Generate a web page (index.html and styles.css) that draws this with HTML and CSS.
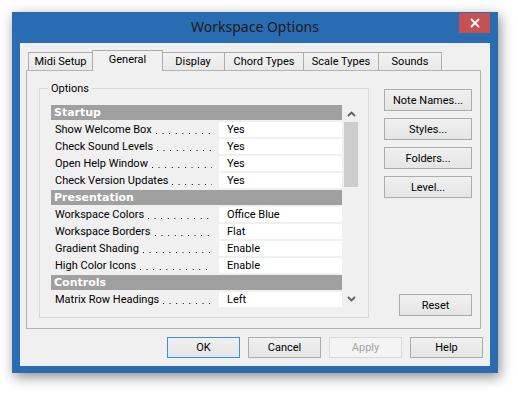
FILE: index.html
```html
<!DOCTYPE html>
<html>
<head>
<meta charset="utf-8">
<link rel="stylesheet" href="styles.css">
</head>
<body>
<div class="window">
  <div class="titlebar">
    <span class="title">Workspace Options</span>
    <div class="close"><svg width="10" height="10" viewBox="0 0 10 10"><path d="M1 1L9 9M9 1L1 9" stroke="#fff" stroke-width="1.8" fill="none"/></svg></div>
  </div>
  <div class="client">
    <div class="tabs">
      <div class="tab w65">Midi Setup</div>
      <div class="tab sel">General</div>
      <div class="tab w63">Display</div>
      <div class="tab w79">Chord Types</div>
      <div class="tab w75">Scale Types</div>
      <div class="tab w63">Sounds</div>
    </div>
    <div class="panel">
      <div class="group">
        <span class="legend">Options</span>
        <div class="grid">
          <div class="rows">
            <div class="head">Startup</div>
            <div class="row"><div class="lab"><span>Show Welcome Box</span><i class="lead"></i></div><div class="val">Yes</div></div>
            <div class="row"><div class="lab"><span>Check Sound Levels</span><i class="lead"></i></div><div class="val">Yes</div></div>
            <div class="row"><div class="lab"><span>Open Help Window</span><i class="lead"></i></div><div class="val">Yes</div></div>
            <div class="row"><div class="lab"><span>Check Version Updates</span><i class="lead"></i></div><div class="val">Yes</div></div>
            <div class="head">Presentation</div>
            <div class="row"><div class="lab"><span>Workspace Colors</span><i class="lead"></i></div><div class="val">Office Blue</div></div>
            <div class="row"><div class="lab"><span>Workspace Borders</span><i class="lead"></i></div><div class="val">Flat</div></div>
            <div class="row"><div class="lab"><span>Gradient Shading</span><i class="lead"></i></div><div class="val">Enable</div></div>
            <div class="row"><div class="lab"><span>High Color Icons</span><i class="lead"></i></div><div class="val">Enable</div></div>
            <div class="head">Controls</div>
            <div class="row"><div class="lab"><span>Matrix Row Headings</span><i class="lead"></i></div><div class="val">Left</div></div>
          </div>
          <div class="scroll">
            <div class="arrow"><svg width="9" height="6" viewBox="0 0 9 6"><path d="M1 5L4.5 1.5L8 5" stroke="#606060" stroke-width="1.8" fill="none"/></svg></div>
            <div class="track"><div class="thumb"></div></div>
            <div class="arrow"><svg width="9" height="6" viewBox="0 0 9 6"><path d="M1 1L4.5 4.5L8 1" stroke="#606060" stroke-width="1.8" fill="none"/></svg></div>
          </div>
        </div>
      </div>
      <div class="side">
        <div class="btn wide">Note Names...</div>
        <div class="btn wide">Styles...</div>
        <div class="btn wide">Folders...</div>
        <div class="btn wide">Level...</div>
        <div class="btn reset">Reset</div>
      </div>
    </div>
    <div class="footer">
      <div class="btn def">OK</div>
      <div class="btn">Cancel</div>
      <div class="btn dis">Apply</div>
      <div class="btn">Help</div>
    </div>
  </div>
</div>
</body>
</html>
```
FILE: styles.css
```css
html, body {
  margin: 0;
  padding: 0;
  background: #ffffff;
  width: 518px;
  height: 394px;
  overflow: hidden;
}
body {
  padding: 12px 0 0 12px;
  box-sizing: border-box;
  font-family: Roboto, "Liberation Sans", sans-serif;
  font-size: 11px;
  color: #000;
}
.window {
  width: 486px;
  height: 361px;
  background: #2a6cb1;
  box-shadow: 2px 4px 12px rgba(0,0,0,0.45);
  display: flex;
  flex-direction: column;
}
.titlebar {
  height: 31px;
  position: relative;
  display: flex;
  align-items: center;
  justify-content: center;
}
.title {
  font-family: "Noto Sans", "Open Sans", sans-serif;
  font-size: 14px;
  color: #1b1b1b;
  margin-top: -2px;
}
.close {
  position: absolute;
  top: 1px;
  right: 8px;
  width: 31px;
  height: 20px;
  background: #c75050;
  display: flex;
  align-items: center;
  justify-content: center;
}
.client {
  margin: 0 8px 7px 8px;
  flex: 1;
  background: #f0f0f0;
  display: flex;
  flex-direction: column;
}
.tabs {
  display: flex;
  align-items: flex-end;
  height: 20px;
  margin: 7px 0 0 8px;
}
.tab {
  box-sizing: border-box;
  height: 18px;
  border: 1px solid #acacac;
  border-left: none;
  border-bottom: none;
  background: linear-gradient(#f3f3f3, #e8e8e8);
  text-align: center;
  line-height: 17px;
  white-space: nowrap;
}
.tab:first-child { border-left: 1px solid #acacac; }
.w65 { width: 65px; }
.w63 { width: 63px; }
.w79 { width: 79px; }
.w75 { width: 75px; }
.tab.sel {
  width: 71px;
  height: 21px;
  margin: 0 -1px -1px -1px;
  border-left: 1px solid #acacac;
  background: #f0f0f0;
  position: relative;
  z-index: 1;
  line-height: 17px;
}
.panel {
  box-sizing: border-box;
  height: 259px;
  margin: 0 9px 0 6px;
  border: 1px solid #b4b4b4;
  display: flex;
  padding: 17px 8px 0 12px;
}
.group {
  box-sizing: border-box;
  width: 330px;
  height: 230px;
  border: 1px solid #d8d8d8;
  position: relative;
  padding: 16px 0 0 11px;
  flex: none;
}
.legend {
  position: absolute;
  top: -8px;
  left: 8px;
  padding: 0 3px;
  background: #f0f0f0;
  line-height: 15px;
}
.grid {
  display: flex;
}
.rows {
  width: 291px;
  display: flex;
  flex-direction: column;
  gap: 2px;
}
.head {
  height: 15px;
  background: #a0a0a0;
  color: #fff;
  font-family: "DejaVu Sans", sans-serif;
  font-weight: bold;
  font-size: 11px;
  line-height: 15px;
  padding-left: 3px;
}
.row {
  display: flex;
  height: 15px;
  gap: 2px;
}
.lab {
  width: 166px;
  flex: none;
  box-sizing: border-box;
  padding: 0 5px 0 4px;
  white-space: nowrap;
  line-height: 15px;
  display: flex;
}
.lead {
  flex: 1;
  margin-left: 4px;
  background-image: linear-gradient(to right, #000 1.4px, transparent 1.4px);
  background-size: 6.6px 1px;
  background-repeat: repeat-x;
  background-position: 0 11px;
}
.val {
  flex: 1;
  background: #fff;
  padding-left: 8px;
  line-height: 15px;
}
.scroll {
  width: 18px;
  display: flex;
  flex-direction: column;
}
.arrow {
  height: 17px;
  display: flex;
  align-items: center;
  justify-content: center;
}
.track {
  flex: 1;
  padding: 0 2px;
}
.thumb {
  height: 65px;
  background: #cdcdcd;
}
.side {
  margin-left: 15px;
  padding-top: 1px;
  padding-bottom: 12px;
  display: flex;
  flex-direction: column;
  gap: 7px;
}
.btn {
  box-sizing: border-box;
  width: 73px;
  height: 21px;
  border: 1px solid #acacac;
  background: linear-gradient(#f0f0f0, #e5e5e5);
  display: flex;
  align-items: center;
  justify-content: center;
}
.btn.wide {
  width: 88px;
  height: 22px;
}
.btn.reset {
  margin-top: auto;
  align-self: flex-end;
  height: 22px;
}
.btn.def {
  border-color: #3c8fe0;
}
.btn.dis {
  border-color: #d9d9d9;
  background: #f4f4f4;
  color: #a3a3a3;
}
.footer {
  display: flex;
  justify-content: flex-end;
  gap: 8px;
  margin-top: 8px;
  padding-right: 7px;
}
```
